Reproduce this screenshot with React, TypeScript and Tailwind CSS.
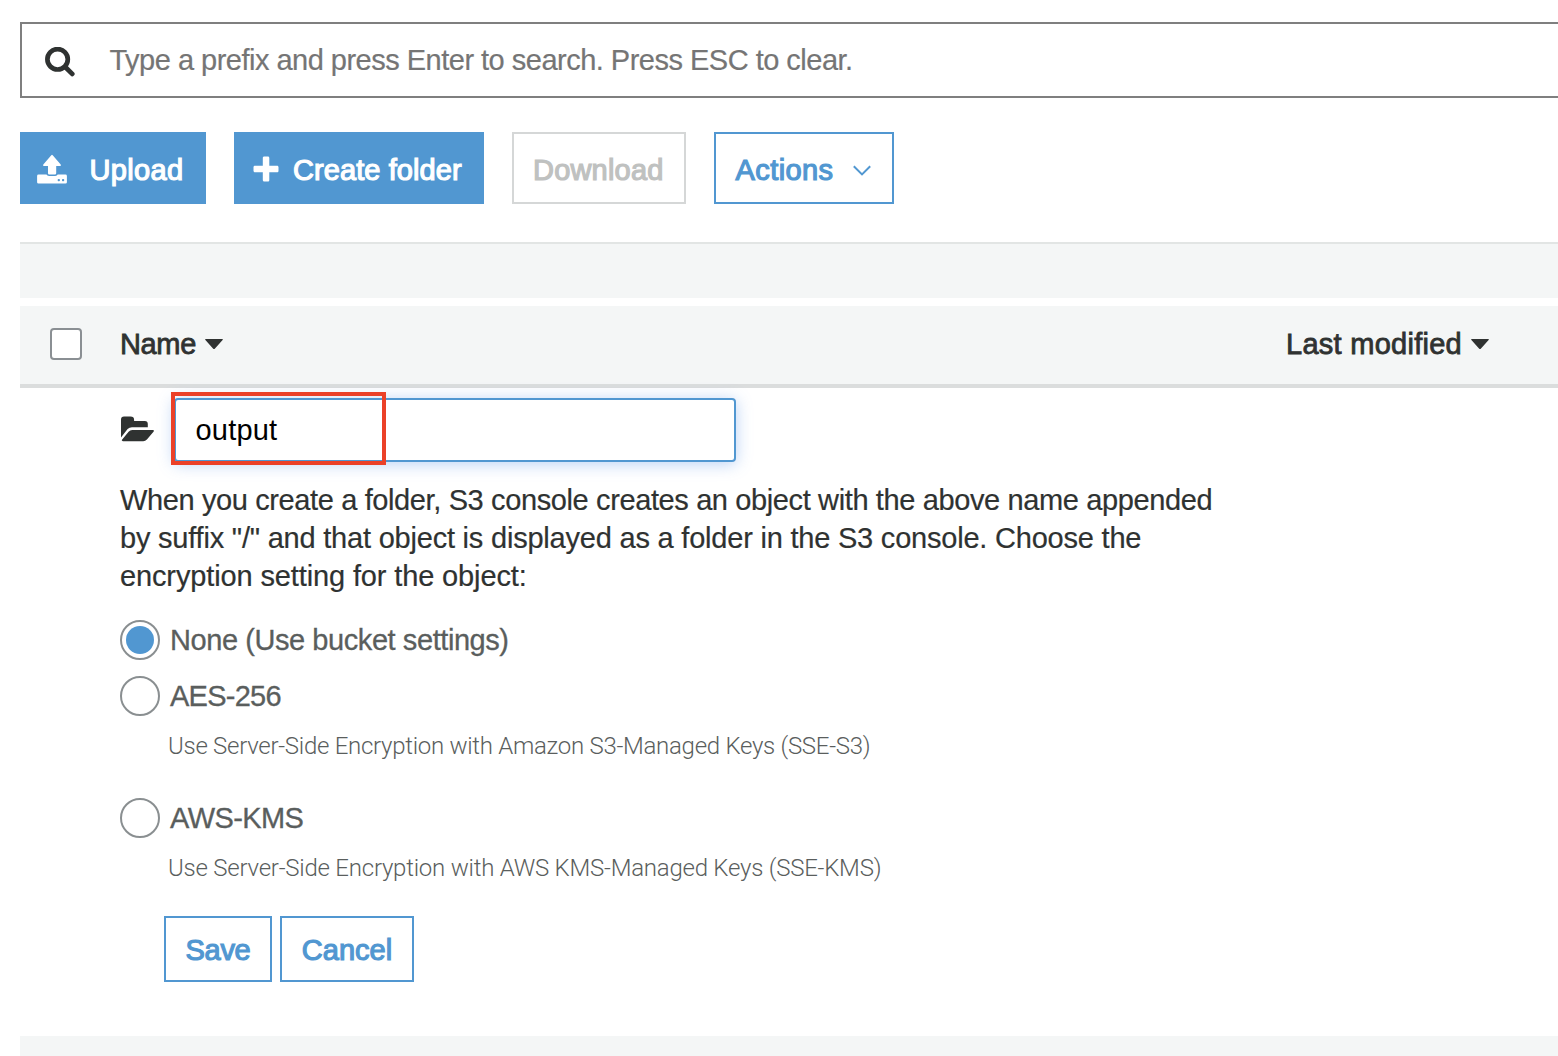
import type { ReactNode } from "react";

const SearchIcon = () => (
  <svg className="mt-[3px] h-[30px] w-[30px] shrink-0" viewBox="0 0 30 30" fill="none" stroke="#2f3231">
    <circle cx="12.6" cy="12.3" r="10.2" strokeWidth="4.7" />
    <path d="M20.500 20.300 27.200 26.900" strokeWidth="4.800" strokeLinecap="round" />
  </svg>
);

const UploadIcon = () => (
  <svg className="h-[30px] w-[30px] shrink-0" viewBox="0 0 30 30" fill="#fff">
    <path d="M14.300 1.200q.7-.7 1.400 0l8 9.300q1 1.500-.9 1.500H19.200v7.200q0 1.300-1.300 1.300h-5.600q-1.300 0-1.300-1.300V12H7.200q-1.900 0-.9-1.500Z" />
    <path d="M1.500 20.500H9.500q.6 1.400 2.500 1.400h6.200q1.900 0 2.500-1.400h7.800q1.400 0 1.400 1.400v6.300q0 1.400-1.400 1.400H1.500q-1.400 0-1.400-1.400v-6.300q0-1.400 1.400-1.400Z" />
    <rect x="20.700" y="25" width="2.200" height="2.200" rx=".8" fill="#5197d1" />
    <rect x="25" y="25" width="2.200" height="2.200" rx=".8" fill="#5197d1" />
  </svg>
);

const PlusIcon = () => (
  <svg className="h-[26px] w-[26px] shrink-0" viewBox="0 0 26 26" fill="#fff">
    <path d="M11.300.5h3.500c1 0 1.500.6 1.500 1.500v7.700h7.700c1 0 1.500.6 1.500 1.500v3.500c0 1-.6 1.500-1.500 1.500h-7.700V24c0 1-.6 1.500-1.500 1.500h-3.500c-1 0-1.500-.6-1.500-1.500v-7.800H2c-1 0-1.500-.6-1.500-1.500v-3.500c0-1 .6-1.500 1.500-1.500h7.800V2c0-1 .6-1.500 1.500-1.500Z" />
  </svg>
);

const FolderIcon = () => (
  <svg className="-mt-[2px] h-[26px] w-[34px] shrink-0" viewBox="0 0 34 26" fill="#2f3231">
    <path d="M1 21.500V3.500Q1 .5 4 .5h6.500q3.600 0 3.600 3.200v1.200h10.700q3 0 3 3v3.300H12q-2.600 0-4.400 1.900Z" />
    <path d="M12.200 13.900h20.400c1.300 0 1.700.8.9 1.800l-6.600 7.800q-1.500 1.700-3.700 1.700H3c-1.200 0-1.600-.8-.8-1.800l6.400-7.700q1.500-1.800 3.600-1.800Z" />
  </svg>
);

const Caret = () => (
  <svg className="h-[11px] w-[18px] shrink-0" viewBox="0 0 18 11" fill="#2f3231">
    <path d="M.8 0h16.400q1.200 0 .4.900L10 9.600q-1 1-2 0L.4.900Q-.4 0 .8 0Z" />
  </svg>
);

const buttonText = "text-[29px] leading-[36px] whitespace-nowrap [-webkit-text-stroke:1.2px]";

function Option({ label, checked, tracking, children }: { label: string; checked?: boolean; tracking: string; children?: ReactNode }) {
  return (
    <div>
      <div className="flex h-10 items-center">
        <span className="flex size-10 shrink-0 items-center justify-center rounded-full border-2 border-[#8a8f91]">
          {checked && <span className="size-7 rounded-full bg-[#5197d1]" />}
        </span>
        <span className={`ml-[10px] text-[29px] leading-[38px] text-[#5a5e5d] [-webkit-text-stroke:0.3px] ${tracking}`}>{label}</span>
      </div>
      {children && (
        <p className="ml-12 mt-[15px] font-['Roboto'] text-[24px] leading-[30px] font-light whitespace-nowrap text-[#5a5e5d]">{children}</p>
      )}
    </div>
  );
}

export default function App() {
  return (
    <div className="flex h-[1056px] w-[1558px] flex-col overflow-hidden bg-white pl-5 pt-[22px] font-['Liberation_Sans',Arial,sans-serif] text-[#2f3231]">
      <div className="flex h-[76px] shrink-0 items-center border-2 border-r-0 border-[#7f7f7f] pl-[23px]">
        <SearchIcon />
        <span className="ml-[34.5px] text-[29px] leading-9 tracking-[-0.510px] text-[#757575] [-webkit-text-stroke:0.2px]">
          Type a prefix and press Enter to search. Press ESC to clear.
        </span>
      </div>

      <div className="mt-[34px] flex h-[72px] shrink-0 gap-7">
        <button className="flex w-[186px] items-center bg-[#5197d1] pl-[17px] pt-[4px] text-white">
          <span className="-mt-[2px]"><UploadIcon /></span>
          <span className={`ml-[22.5px] tracking-[0.350px] ${buttonText}`}>Upload</span>
        </button>
        <button className="flex w-[250px] items-center bg-[#5197d1] pl-[19px] pt-[4px] text-white">
          <span className="-mt-[2px]"><PlusIcon /></span>
          <span className={`ml-[14px] tracking-[0.080px] ${buttonText}`}>Create folder</span>
        </button>
        <button className="flex w-[174px] items-center border-2 border-[#d5d7d7] pl-[19px] pt-[4px] text-[#bfc1c0]">
          <span className={`tracking-[0.200px] ${buttonText}`}>Download</span>
        </button>
        <button className="flex w-[180px] items-center border-2 border-[#5197d1] pl-[19.500px] pt-[4px] text-[#5197d1]">
          <span className={`w-[98px] tracking-[0.400px] ${buttonText}`}>Actions</span>
          <svg className="ml-[19.500px] h-[11px] w-[18px]" viewBox="0 0 18 11" fill="none" stroke="#5197d1" strokeWidth="2">
            <path d="m.8 1.200 8.200 8.200 8.200-8.200" />
          </svg>
        </button>
      </div>

      <div className="mt-[38px] h-14 shrink-0 border-t-2 border-[#e2e5e4] bg-[#f4f6f6]" />

      <div className="mt-2 flex h-[82px] shrink-0 items-center border-b-4 border-[#dbdddd] bg-[#f4f6f6] pl-[30px] text-[29px] leading-9">
        <span className="mt-[-2px] size-8 shrink-0 rounded-[4px] border-2 border-[#8a8f93] bg-white" />
        <span className="-mt-[2px] ml-[38px] flex w-[1166px] items-center">
          <span className="w-[77px] tracking-[-0.350px] [-webkit-text-stroke:0.8px]">Name</span>
          <span className="ml-[8px] mt-px"><Caret /></span>
        </span>
        <span className="-mt-[2px] flex items-center whitespace-nowrap">
          <span className="w-[177px] tracking-[0.270px] [-webkit-text-stroke:0.8px]">Last modified</span>
          <span className="ml-[8px] mt-px"><Caret /></span>
        </span>
      </div>

      <div className="flex h-[648px] shrink-0 flex-col pl-[100px] pt-[10px]">
        <div className="flex h-16 items-center">
          <FolderIcon />
          <div className="relative ml-5 flex h-16 w-[562px] items-center rounded-[4px] border-2 border-[#5197d1] bg-white pl-[19.5px] shadow-[0_2px_16px_rgba(80,140,230,0.4)]">
            <span className="text-[29px] leading-9 tracking-[0.200px] text-black">output</span>
            <span className="absolute -left-[5px] -top-[8px] h-[73px] w-[215px] border-4 border-[#eb4128]" />
          </div>
        </div>

        <p className="mt-[19px] text-[29px] leading-[38px] whitespace-nowrap [-webkit-text-stroke:0.2px]">
          <span className="block tracking-[-0.380px]">When you create a folder, S3 console creates an object with the above name appended</span>
          <span className="block tracking-[-0.210px]">by suffix "/" and that object is displayed as a folder in the S3 console. Choose the</span>
          <span className="block tracking-[-0.130px]">encryption setting for the object:</span>
        </p>

        <div className="mt-[25px]">
          <Option label="None (Use bucket settings)" checked tracking="tracking-[-0.430px]" />
        </div>
        <div className="mt-4">
          <Option label="AES-256" tracking="tracking-[-0.750px]">
            <span className="tracking-[-0.280px]">Use Server-Side Encryption with Amazon S3-Managed Keys (SSE-S3)</span>
          </Option>
        </div>
        <div className="mt-[37px]">
          <Option label="AWS-KMS" tracking="tracking-[-0.600px]">
            <span className="tracking-[-0.235px]">Use Server-Side Encryption with AWS KMS-Managed Keys (SSE-KMS)</span>
          </Option>
        </div>

        <div className="ml-11 mt-[33px] flex h-[66px] gap-2 text-[#5197d1]">
          <button className="flex w-[108px] items-center justify-center border-2 border-[#5197d1] pt-[2px]">
            <span className={`tracking-[-0.300px] ${buttonText}`}>Save</span>
          </button>
          <button className="flex w-[134px] items-center justify-center border-2 border-[#5197d1] pt-[2px]">
            <span className={`tracking-[0px] ${buttonText}`}>Cancel</span>
          </button>
        </div>
      </div>

      <div className="h-5 shrink-0 bg-[#f4f6f6]" />
    </div>
  );
}
